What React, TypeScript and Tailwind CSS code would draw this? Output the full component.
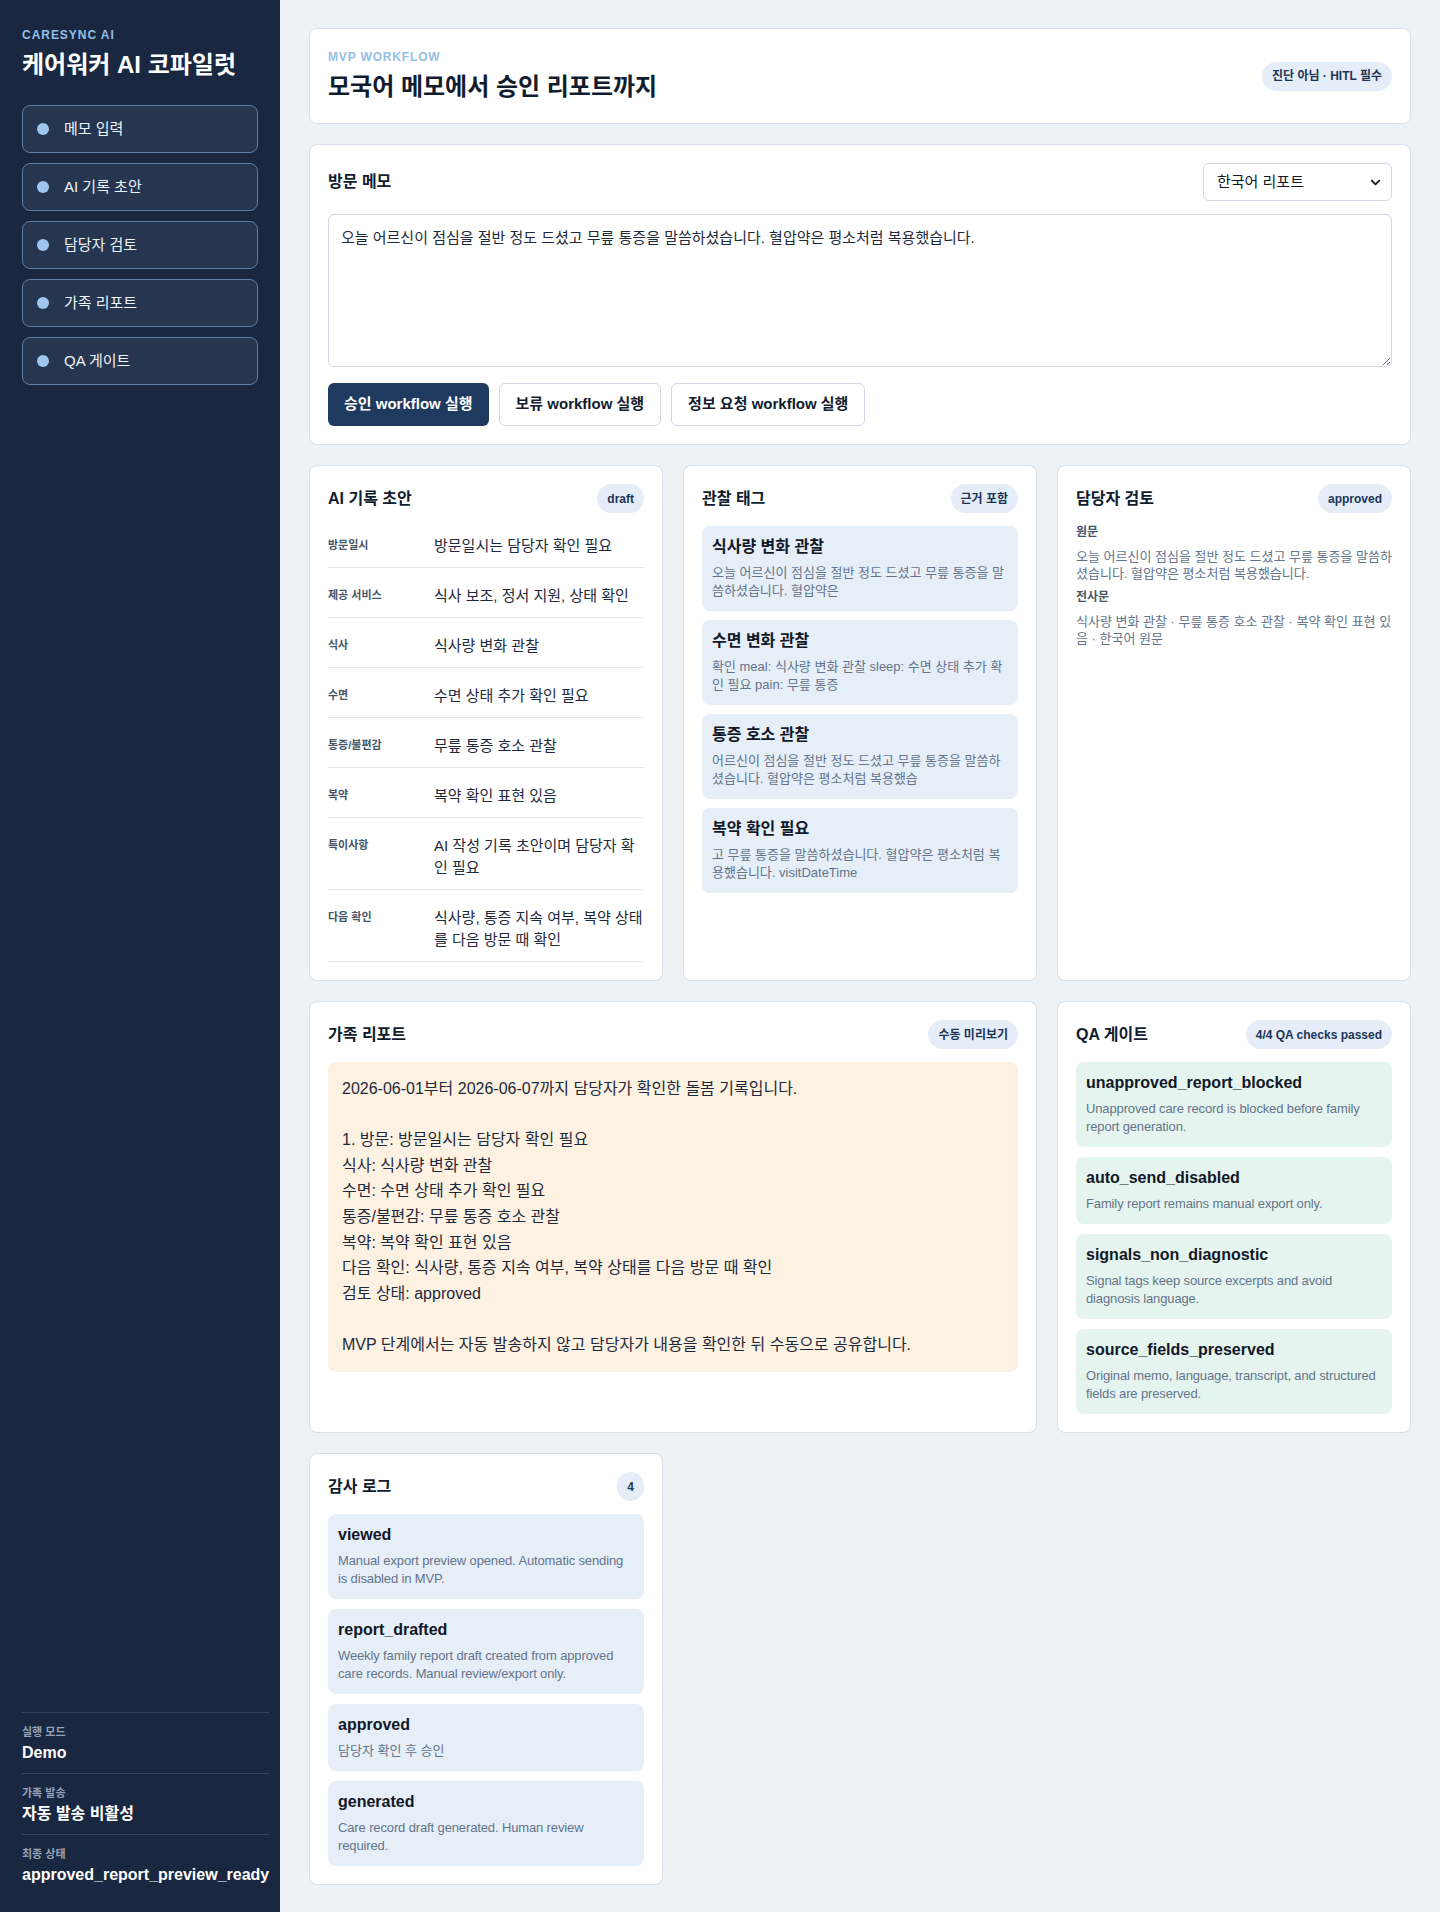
import { ChevronDown } from 'lucide-react';

const NAV_ITEMS = ['메모 입력', 'AI 기록 초안', '담당자 검토', '가족 리포트', 'QA 게이트'];

const DRAFT_ROWS = [
  ['방문일시', '방문일시는 담당자 확인 필요'],
  ['제공 서비스', '식사 보조, 정서 지원, 상태 확인'],
  ['식사', '식사량 변화 관찰'],
  ['수면', '수면 상태 추가 확인 필요'],
  ['통증/불편감', '무릎 통증 호소 관찰'],
  ['복약', '복약 확인 표현 있음'],
  ['특이사항', 'AI 작성 기록 초안이며 담당자 확인 필요'],
  ['다음 확인', '식사량, 통증 지속 여부, 복약 상태를 다음 방문 때 확인'],
];

const SIGNAL_TAGS = [
  { title: '식사량 변화 관찰', excerpt: '오늘 어르신이 점심을 절반 정도 드셨고 무릎 통증을 말씀하셨습니다. 혈압약은' },
  { title: '수면 변화 관찰', excerpt: '확인 meal: 식사량 변화 관찰 sleep: 수면 상태 추가 확인 필요 pain: 무릎 통증' },
  { title: '통증 호소 관찰', excerpt: '어르신이 점심을 절반 정도 드셨고 무릎 통증을 말씀하셨습니다. 혈압약은 평소처럼 복용했습' },
  { title: '복약 확인 필요', excerpt: '고 무릎 통증을 말씀하셨습니다. 혈압약은 평소처럼 복용했습니다. visitDateTime' },
];

const QA_CHECKS = [
  { id: 'unapproved_report_blocked', note: 'Unapproved care record is blocked before family report generation.' },
  { id: 'auto_send_disabled', note: 'Family report remains manual export only.' },
  { id: 'signals_non_diagnostic', note: 'Signal tags keep source excerpts and avoid diagnosis language.' },
  { id: 'source_fields_preserved', note: 'Original memo, language, transcript, and structured fields are preserved.' },
];

const AUDIT_LOG = [
  { event: 'viewed', note: 'Manual export preview opened. Automatic sending is disabled in MVP.' },
  { event: 'report_drafted', note: 'Weekly family report draft created from approved care records. Manual review/export only.' },
  { event: 'approved', note: '담당자 확인 후 승인' },
  { event: 'generated', note: 'Care record draft generated. Human review required.' },
];

const FAMILY_REPORT = `2026-06-01부터 2026-06-07까지 담당자가 확인한 돌봄 기록입니다.

1. 방문: 방문일시는 담당자 확인 필요
식사: 식사량 변화 관찰
수면: 수면 상태 추가 확인 필요
통증/불편감: 무릎 통증 호소 관찰
복약: 복약 확인 표현 있음
다음 확인: 식사량, 통증 지속 여부, 복약 상태를 다음 방문 때 확인
검토 상태: approved

MVP 단계에서는 자동 발송하지 않고 담당자가 내용을 확인한 뒤 수동으로 공유합니다.`;

const MEMO = '오늘 어르신이 점심을 절반 정도 드셨고 무릎 통증을 말씀하셨습니다. 혈압약은 평소처럼 복용했습니다.';

function Badge({ children }: { children: React.ReactNode }) {
  return (
    <span className="inline-flex h-[29px] items-center rounded-full bg-[#e4edf8] px-[10px] text-[12px] font-bold text-[#1c3557]">
      {children}
    </span>
  );
}

function Card({ children, className = '' }: { children: React.ReactNode; className?: string }) {
  return (
    <section className={`rounded-lg border border-[#d7e0ea] bg-white p-[18px] ${className}`}>
      {children}
    </section>
  );
}

function CardHeader({ title, badge }: { title: string; badge: string }) {
  return (
    <div className="flex h-[29px] items-center justify-between">
      <h2 className="text-[16px] font-bold text-[#111c2e]">{title}</h2>
      <Badge>{badge}</Badge>
    </div>
  );
}

function InfoItem({ title, body, tone }: { title: string; body: string; tone: 'blue' | 'green' }) {
  const latin = /^[\x00-\x7F]*$/.test(body);
  return (
    <div className={`rounded-lg px-[10px] pb-[11px] pt-[10px] ${tone === 'green' ? 'bg-[#e5f4ee]' : 'bg-[#e6eef8]'}`}>
      <div className="text-[16px] font-bold leading-[22px] text-[#111827]">{title}</div>
      <p className={`mt-[6px] text-[13px] leading-[18px] text-[#64748b] ${latin ? 'tracking-[-0.01em]' : ''}`}>{body}</p>
    </div>
  );
}

function Sidebar() {
  return (
    <aside className="flex w-[280px] shrink-0 flex-col justify-between bg-[#1a2740] px-[22px] pb-[18px] pt-[27px]">
      <div>
        <div className="text-[12px] font-bold leading-[16px] tracking-[0.08em] text-[#93bfe6]">CARESYNC AI</div>
        <h1 className="mt-[7px] text-[24px] font-bold leading-[30px] text-white">케어워커 AI 코파일럿</h1>
        <nav className="mt-[25px] flex flex-col gap-[10px]">
          {NAV_ITEMS.map((item) => (
            <div
              key={item}
              className="flex h-[48px] items-center gap-[15px] rounded-lg border border-[#5d7ea5] bg-[#263650] px-[14px] text-[15px] text-[#eef3f8]"
            >
              <span className="h-3 w-3 rounded-full bg-[#9fc6ec]" />
              {item}
            </div>
          ))}
        </nav>
      </div>

      <div className="w-max min-w-full">
        {[
          ['실행 모드', 'Demo'],
          ['가족 발송', '자동 발송 비활성'],
          ['최종 상태', 'approved_report_preview_ready'],
        ].map(([label, value]) => (
          <div key={label} className="border-t border-[#33445e] pb-[10px] pt-[12px]">
            <div className="text-[11px] font-bold leading-[14px] text-[#94a3b8]">{label}</div>
            <div className="mt-[4px] text-[16px] font-bold leading-[20px] text-white">{value}</div>
          </div>
        ))}
      </div>
    </aside>
  );
}

export default function App() {
  return (
    <div className="flex min-h-screen bg-[#edf2f7] font-['Liberation_Sans','Noto_Sans_CJK_KR',sans-serif]">
      <Sidebar />

      <main className="flex min-w-0 flex-1 flex-col gap-5 px-[29px] pb-[28px] pt-[28px]">
        {/* header */}
        <section className="flex items-center justify-between rounded-lg border border-[#d7e0ea] bg-white px-[18px] py-[20px]">
          <div>
            <div className="text-[12px] font-bold leading-[16px] tracking-[0.07em] text-[#93bfe6]">MVP WORKFLOW</div>
            <h1 className="mt-[6px] text-[24px] font-bold leading-[32px] text-[#111c2e]">모국어 메모에서 승인 리포트까지</h1>
          </div>
          <Badge>진단 아님 · HITL 필수</Badge>
        </section>

        {/* memo input */}
        <Card>
          <div className="flex items-center justify-between">
            <h2 className="text-[16px] font-bold text-[#111c2e]">방문 메모</h2>
            <div className="flex h-[38px] w-[189px] items-center justify-between rounded-md border border-[#cfd8e3] bg-white pl-[13px] pr-[8px] text-[15px] text-[#111827]">
              한국어 리포트
              <ChevronDown size={15} strokeWidth={3} className="text-[#111827]" />
            </div>
          </div>
          <textarea
            defaultValue={MEMO}
            className="mt-[13px] block h-[153px] w-full rounded-md border border-[#cfd8e3] p-3 text-[15px] leading-[1.5] text-[#1e293b] outline-none"
          />
          <div className="mt-4 flex gap-2.5">
            <button type="button" className="h-[43px] rounded-md bg-[#1f3a5f] px-4 text-[15px] font-bold text-white">
              승인 workflow 실행
            </button>
            <button type="button" className="h-[43px] rounded-md border border-[#cfd8e3] bg-white px-4 text-[15px] font-bold text-[#111c2e]">
              보류 workflow 실행
            </button>
            <button type="button" className="h-[43px] rounded-md border border-[#cfd8e3] bg-white px-4 text-[15px] font-bold text-[#111c2e]">
              정보 요청 workflow 실행
            </button>
          </div>
        </Card>

        <div className="grid grid-cols-3 gap-5">
          {/* AI draft */}
          <Card>
            <CardHeader title="AI 기록 초안" badge="draft" />
            <dl className="mt-[5px]">
              {DRAFT_ROWS.map(([label, value]) => (
                <div key={label} className="grid grid-cols-[106px_1fr] items-start border-b border-[#dfe6ee] pb-[10px] pt-[17px]">
                  <dt className="pt-[2px] text-[11px] font-bold leading-[16px] text-[#475569]">{label}</dt>
                  <dd className="text-[15px] leading-[22px] text-[#1e293b]">{value}</dd>
                </div>
              ))}
            </dl>
          </Card>

          {/* signal tags */}
          <Card>
            <CardHeader title="관찰 태그" badge="근거 포함" />
            <div className="mt-[13px] flex flex-col gap-[9px]">
              {SIGNAL_TAGS.map((tag) => (
                <InfoItem key={tag.title} title={tag.title} body={tag.excerpt} tone="blue" />
              ))}
            </div>
          </Card>

          {/* review */}
          <Card>
            <CardHeader title="담당자 검토" badge="approved" />
            <div className="mt-[10px]">
              <div className="text-[12px] font-bold leading-[18px] text-[#475569]">원문</div>
              <p className="mt-[8px] text-[13px] leading-[16.5px] text-[#64748b]">{MEMO}</p>
              <div className="mt-[6px] text-[12px] font-bold leading-[18px] text-[#475569]">전사문</div>
              <p className="mt-[8px] text-[13px] leading-[16.5px] text-[#64748b]">
                식사량 변화 관찰 · 무릎 통증 호소 관찰 · 복약 확인 표현 있음 · 한국어 원문
              </p>
            </div>
          </Card>

          {/* family report */}
          <Card className="col-span-2">
            <CardHeader title="가족 리포트" badge="수동 미리보기" />
            <div className="mt-[13px] whitespace-pre-wrap rounded-lg bg-[#fdf1e2] p-[14px] text-[16px] leading-[1.6] text-[#1e293b]">
              {FAMILY_REPORT}
            </div>
          </Card>

          {/* QA gate */}
          <Card>
            <CardHeader title="QA 게이트" badge="4/4 QA checks passed" />
            <div className="mt-[13px] flex flex-col gap-[10px]">
              {QA_CHECKS.map((check) => (
                <InfoItem key={check.id} title={check.id} body={check.note} tone="green" />
              ))}
            </div>
          </Card>

          {/* audit log */}
          <Card>
            <CardHeader title="감사 로그" badge="4" />
            <div className="mt-[13px] flex flex-col gap-[10px]">
              {AUDIT_LOG.map((entry) => (
                <InfoItem key={entry.event} title={entry.event} body={entry.note} tone="blue" />
              ))}
            </div>
          </Card>
        </div>
      </main>
    </div>
  );
}
